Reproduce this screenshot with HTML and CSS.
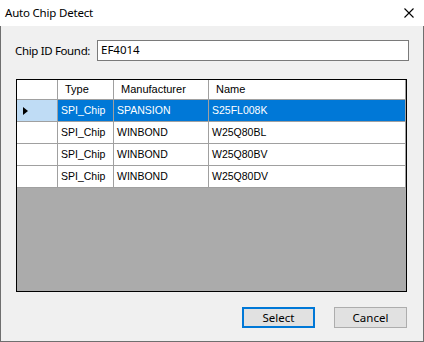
FILE: index.html
```html
<!DOCTYPE html>
<html>
<head>
<meta charset="utf-8">
<link rel="stylesheet" href="styles.css">
</head>
<body>
<div class="window">
  <div class="titlebar">
    <span class="title">Auto Chip Detect</span>
    <svg class="close" width="10" height="10" viewBox="0 0 10 10"><path d="M0.5 0.5 L9.5 9.5 M9.5 0.5 L0.5 9.5" stroke="#000" stroke-width="1.1" fill="none"/></svg>
  </div>
  <div class="content">
    <div class="idrow">
      <span class="label">Chip ID Found:</span>
      <div class="textbox">EF4014</div>
    </div>
    <div class="grid">
      <div class="table">
        <div class="cell hdr rh"></div>
        <div class="cell hdr">Type</div>
        <div class="cell hdr">Manufacturer</div>
        <div class="cell hdr">Name</div>

        <div class="cell rh cur"><span class="arrow"></span></div>
        <div class="cell sel">SPI_Chip</div>
        <div class="cell sel">SPANSION</div>
        <div class="cell sel">S25FL008K</div>

        <div class="cell rh"></div>
        <div class="cell">SPI_Chip</div>
        <div class="cell">WINBOND</div>
        <div class="cell">W25Q80BL</div>

        <div class="cell rh"></div>
        <div class="cell">SPI_Chip</div>
        <div class="cell">WINBOND</div>
        <div class="cell">W25Q80BV</div>

        <div class="cell rh"></div>
        <div class="cell">SPI_Chip</div>
        <div class="cell">WINBOND</div>
        <div class="cell">W25Q80DV</div>
      </div>
    </div>
    <div class="buttons">
      <button class="btn default">Select</button>
      <button class="btn">Cancel</button>
    </div>
  </div>
</div>
</body>
</html>
```
FILE: styles.css
```css
html, body {
  margin: 0;
  padding: 0;
}
body {
  width: 424px;
  height: 342px;
  font-family: "Noto Sans", "Liberation Sans", sans-serif;
  font-size: 11.5px;
  color: #000;
  background: #fff;
}
.window {
  width: 424px;
  height: 342px;
  display: flex;
  flex-direction: column;
  box-sizing: border-box;
}
.titlebar {
  height: 26px;
  flex: none;
  background: #fff;
  display: flex;
  align-items: center;
  justify-content: space-between;
  padding: 0 10px 0 5px;
  box-sizing: border-box;
}
.title {
  font-size: 11.5px;
  line-height: 16px;
  letter-spacing: -0.2px;
  margin-top: -1px;
}
.close {
  display: block;
  margin-top: -1px;
}
.content {
  flex: 1;
  background: #f0f0f0;
  border: 1px solid #6f6f6f;
  border-top: none;
  padding: 14px 14px 0 14px;
  display: flex;
  flex-direction: column;
}
.idrow {
  display: flex;
  align-items: center;
  height: 21px;
}
.label {
  width: 82px;
  flex: none;
  line-height: 16px;
  white-space: nowrap;
  letter-spacing: -0.35px;
}
.textbox {
  flex: 1;
  height: 21px;
  box-sizing: border-box;
  border: 1px solid #7a7a7a;
  background: #fff;
  padding: 0 3px;
  line-height: 18px;
}
.grid {
  margin: 18px 2px 0 1px;
  height: 213px;
  box-sizing: border-box;
  border: 1px solid #000;
  background: #ababab;
}
.table {
  display: grid;
  grid-template-columns: 41px 56px 95px 197px;
  grid-template-rows: 20px 22px 22px 22px 22px;
  background: #fff;
  font-family: "Liberation Sans", Arial, sans-serif;
  font-size: 10.5px;
}
.cell {
  box-sizing: border-box;
  border-right: 1px solid #a0a0a0;
  border-bottom: 1px solid #a0a0a0;
  padding: 0 3px;
  line-height: 21px;
  white-space: nowrap;
  overflow: hidden;
}
.cell.hdr {
  font-size: 11px;
  line-height: 19px;
  padding-left: 7px;
}
.cell.sel {
  background: #0078d7;
  color: #fff;
}
.cell.rh {
  padding: 0;
  display: flex;
  align-items: center;
}
.cell.cur {
  background: #bfdcf5;
}
.arrow {
  width: 0;
  height: 0;
  margin-left: 6px;
  border-top: 4px solid transparent;
  border-bottom: 4px solid transparent;
  border-left: 5px solid #000;
}
.buttons {
  margin-top: 15px;
  margin-right: 2px;
  display: flex;
  justify-content: flex-end;
  gap: 19px;
}
.btn {
  width: 73px;
  height: 21px;
  box-sizing: border-box;
  border: 1px solid #adadad;
  background: #e1e1e1;
  font-family: "Noto Sans", "Liberation Sans", sans-serif;
  font-size: 11.5px;
  color: #000;
  padding: 0;
  line-height: 17px;
}
.btn.default {
  border: 2px solid #0078d7;
}
```
